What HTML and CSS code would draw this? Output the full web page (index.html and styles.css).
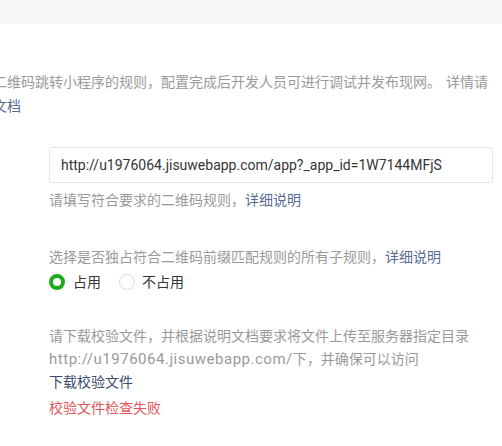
FILE: index.html
```html
<!DOCTYPE html>
<html lang="zh-CN">
<head>
<meta charset="utf-8">
<link rel="stylesheet" href="styles.css">
</head>
<body>
<div class="topbar"></div>
<div class="intro">
  <p class="intro-line">二维码跳转小程序的规则，配置完成后开发人员可进行调试并发布现网。<span class="more">详情请</span></p>
  <p class="intro-line"><a class="link" href="#">文档</a></p>
</div>
<div class="form">
  <div class="field">
    <div class="input">http://u1976064.jisuwebapp.com/app?_app_id=1W7144MFjS</div>
    <p class="tip">请填写符合要求的二维码规则，<a class="link" href="#">详细说明</a></p>
  </div>
  <div class="field field-radio">
    <p class="tip">选择是否独占符合二维码前缀匹配规则的所有子规则，<a class="link" href="#">详细说明</a></p>
    <div class="radios">
      <label class="radio"><span class="dot checked"></span><span class="radio-label">占用</span></label>
      <label class="radio"><span class="dot"></span><span class="radio-label">不占用</span></label>
    </div>
  </div>
  <div class="field field-file">
    <p class="desc">请下载校验文件，并根据说明文档要求将文件上传至服务器指定目录<br><span class="url">http://u1976064.jisuwebapp.com/</span>下，并确保可以访问</p>
    <p class="download"><a class="download-link" href="#">下载校验文件</a></p>
    <p class="error">校验文件检查失败</p>
  </div>
</div>
</body>
</html>
```
FILE: styles.css
```css
* { box-sizing: border-box; }
html, body { margin: 0; padding: 0; background: #fff; }
body {
  font-family: Roboto, "Noto Sans CJK SC", sans-serif;
  font-size: 14px;
  color: #353535;
  overflow: hidden;
  width: 502px;
  height: 446px;
}
p { margin: 0; }
a { text-decoration: none; }
.topbar { height: 24px; background: #f6f7f9; }
.intro { margin: 46px 0 0 -7px; color: #9a9a9a; line-height: 24px; white-space: nowrap; }
.more { margin-left: 5px; }
.link { color: #576b95; }
.form { padding-left: 49px; }
.field { width: 444px; }
.input {
  margin-top: 29px;
  height: 36px;
  border: 1px solid #e7e7eb;
  border-radius: 2px;
  padding: 0 11px;
  line-height: 34px;
  color: #353535;
  white-space: nowrap;
}
.tip { color: #9a9a9a; line-height: 24px; margin-top: 5px; white-space: nowrap; }
.field-radio { margin-top: 33px; }
.field-radio .tip { margin-top: 0; }
.radios { display: flex; align-items: center; height: 26px; }
.radio { display: flex; align-items: center; margin-right: 18px; }
.dot {
  width: 16px; height: 16px; border-radius: 50%;
  border: 1px solid #d9dadc; background: #fff;
  margin-right: 7px;
}
.dot.checked { border: 4px solid #1aad19; margin-right: 8px; }
.radio-label { color: #353535; line-height: 24px; }
.field-file { margin-top: 30px; }
.desc { color: #9a9a9a; line-height: 23px; white-space: nowrap; }
.url { font-size: 15px; letter-spacing: 0.52px; }
.download { line-height: 22px; }
.download-link { color: #3b4a6e; }
.error { color: #e5545a; line-height: 22px; margin-top: 4px; }
```
